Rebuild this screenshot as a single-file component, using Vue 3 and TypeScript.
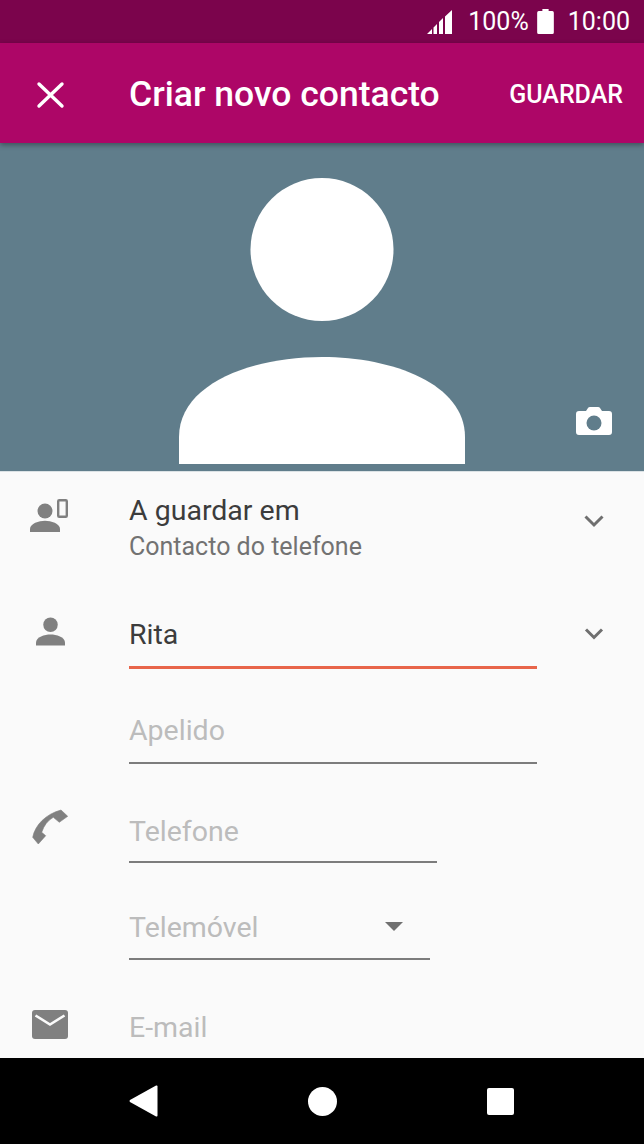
<script setup lang="ts">
const closePath = 'M39 84 L62 106 M62 84 L39 106'
</script>

<template>
  <div class="phone">
    <div class="status">
      <svg class="signal" width="25" height="24" viewBox="0 0 25 24">
        <path d="M0 24 L5 19 V24 Z M6.500 24 V17.500 L10 14 V24 Z M12 24 V12 L16 8 V24 Z M18 24 V6.500 L25 0 V24 Z" fill="#fff" />
      </svg>
      <span class="pct">100%</span>
      <svg class="battery" width="17" height="25" viewBox="0 0 16 24">
        <path d="M5 0 H11 V2 H14.500 Q16 2 16 3.500 V22.500 Q16 24 14.500 24 H1.500 Q0 24 0 22.500 V3.500 Q0 2 1.500 2 H5 Z" fill="#fff" />
      </svg>
      <span class="time">10:00</span>
    </div>

    <header class="appbar">
      <svg class="close" width="100" height="100" viewBox="0 43 100 100">
        <path :d="closePath" stroke="#fff" stroke-width="3.4" stroke-linecap="round" fill="none" />
      </svg>
      <h1>Criar novo contacto</h1>
      <button>GUARDAR</button>
    </header>

    <section class="hero">
      <svg class="avatar" width="286" height="286" viewBox="0 0 286 286">
        <circle cx="143" cy="71.500" r="71.500" fill="#fff" />
        <path d="M0 286 V259 C0 206 72 179 143 179 C214 179 286 206 286 259 V286 Z" fill="#fff" />
      </svg>
      <svg class="camera" width="36" height="28" viewBox="0 0 36 28">
        <path d="M10 4 L12 1 Q12.500 0 14 0 H22 Q23.500 0 24 1 L26 4 H33 Q36 4 36 7 V25 Q36 28 33 28 H3 Q0 28 0 25 V7 Q0 4 3 4 Z" fill="#fff" />
        <circle cx="18" cy="16" r="7.500" fill="#607d8b" />
      </svg>
    </section>

    <main class="form">
      <div class="row account">
        <div class="icon">
          <svg width="40" height="34" viewBox="0 0 40 34">
            <circle cx="15" cy="12" r="7.500" fill="#808080" />
            <path d="M0 33 V30 C0 24.500 9 21.700 15 21.700 C21 21.700 30 24.500 30 30 V33 Z" fill="#808080" />
            <rect x="28.200" y="1.200" width="8.600" height="16.600" rx="1" fill="none" stroke="#808080" stroke-width="2.400" />
          </svg>
        </div>
        <div class="grow">
          <div class="main-text">A guardar em</div>
          <div class="sub-text">Contacto do telefone</div>
        </div>
        <svg class="chev" width="22" height="14" viewBox="0 0 22 14">
          <path d="M2.500 2.500 L11 11 L19.500 2.500" stroke="#6f6f6f" stroke-width="3" fill="none" />
        </svg>
      </div>

      <div class="row name">
        <div class="icon">
          <svg width="29" height="30" viewBox="0 0 30 30">
            <circle cx="15" cy="7.500" r="7.500" fill="#808080" />
            <path d="M0 29 V26 C0 20 9 17.500 15 17.500 C21 17.500 30 20 30 26 V29 Z" fill="#808080" />
          </svg>
        </div>
        <div class="field active wide"><span class="value">Rita</span></div>
        <svg class="chev" width="22" height="14" viewBox="0 0 22 14">
          <path d="M3 2.500 L11 10.500 L19 2.500" stroke="#6f6f6f" stroke-width="3" fill="none" />
        </svg>
      </div>

      <div class="row last">
        <div class="icon"></div>
        <div class="field wide"><span class="hint">Apelido</span></div>
      </div>

      <div class="row phone-row">
        <div class="icon">
          <svg width="38" height="37" viewBox="0 0 38 37">
            <path d="M30 2 L36.700 8.300 L28.300 14.300 L22.300 9.300 Q14 14 10.700 24.300 L14.700 27.700 L7.300 36 L1.700 29.300 C4 17 15 6 30 2 Z" fill="#808080" stroke="#808080" stroke-width="0.6" stroke-linejoin="round" />
          </svg>
        </div>
        <div class="field tel"><span class="hint">Telefone</span></div>
      </div>

      <div class="row type-row">
        <div class="icon"></div>
        <div class="field type">
          <span class="hint">Telemóvel</span>
          <svg class="caret" width="18" height="9" viewBox="0 0 18 9"><path d="M0 0 H18 L9 9 Z" fill="#707070" /></svg>
        </div>
      </div>

      <div class="row mail">
        <div class="icon">
          <svg width="36" height="29" viewBox="0 0 36 29">
            <rect width="36" height="29" rx="3" fill="#808080" />
            <path d="M3.500 5.500 L18 14.500 L32.500 5.500" stroke="#fafafa" stroke-width="2.600" fill="none" />
          </svg>
        </div>
        <span class="hint">E-mail</span>
      </div>
    </main>

    <nav class="navbar">
      <svg width="29" height="34" viewBox="0 0 30 34">
        <path d="M28 1 Q29.500 0.500 29.500 2 V32 Q29.500 33.500 28 33 L1 18 Q0 17 1 16 Z" fill="#fff" />
      </svg>
      <span class="home"></span>
      <span class="recent"></span>
    </nav>
  </div>
</template>

<style>
html,
body {
  margin: 0;
  background: #fafafa;
}
</style>

<style scoped>
.phone {
  width: 644px;
  height: 1144px;
  display: flex;
  flex-direction: column;
  overflow: hidden;
  font-family: Roboto, sans-serif;
}

.status {
  height: 43px;
  flex: none;
  background: #7b044c;
  color: #fff;
  display: flex;
  align-items: center;
  justify-content: flex-end;
  font-size: 25px;
  padding-right: 14px;
  box-sizing: border-box;
}

.signal {
  margin-right: 16px;
}

.pct {
  margin-right: 8px;
}

.battery {
  margin-right: 14px;
}

.appbar {
  height: 100px;
  flex: none;
  background: #ad0667;
  color: #fff;
  display: flex;
  align-items: center;
  position: relative;
  z-index: 1;
  box-shadow: 0 2px 5px rgba(0, 0, 0, 0.35);
}

.close {
  flex: none;
  margin-right: 29px;
}

h1 {
  margin: 0;
  padding-top: 2px;
  font-size: 35.500px;
  font-weight: 500;
  flex: 1;
  white-space: nowrap;
}

button {
  background: none;
  border: 0;
  padding: 2px 0 0;
  margin-right: 21px;
  color: #fff;
  font-family: inherit;
  font-size: 25px;
  font-weight: 500;
}

.hero {
  height: 328px;
  flex: none;
  background: #607d8b;
  position: relative;
  display: flex;
  justify-content: center;
  padding-top: 35px;
  box-sizing: border-box;
}

.camera {
  position: absolute;
  right: 32px;
  bottom: 36px;
}

.form {
  flex: 1;
  min-height: 0;
  overflow: hidden;
  background: #fafafa;
  border-top: 1px solid #dbe2e5;
}

.row {
  display: flex;
  align-items: flex-start;
}

.icon {
  width: 129px;
  flex: none;
  padding-left: 30px;
  box-sizing: border-box;
}

.grow {
  flex: 1;
}

.chev {
  flex: none;
  margin-left: 46px;
}

.account {
  padding-top: 23px;
}

.account .icon svg {
  display: block;
  margin-top: 4px;
}

.account .chev {
  margin-left: 0;
  margin-right: 39px;
  margin-top: 19px;
}

.main-text {
  font-size: 28.500px;
  line-height: 32px;
  color: #3c3c3c;
}

.sub-text {
  font-size: 25px;
  line-height: 30px;
  margin-top: 5px;
  color: #727272;
}

.name {
  margin-top: 22px;
}

.name .icon {
  padding-left: 36px;
  padding-top: 33px;
}

.name .chev {
  margin-left: 46px;
  margin-top: 43px;
}

.field {
  box-sizing: border-box;
  border-bottom: 2px solid #7c7c7c;
  height: 96px;
  padding-top: 43px;
  position: relative;
}

.wide {
  width: 408px;
}

.active {
  height: 85px;
  padding-top: 35px;
  border-bottom: 3px solid #e8654a;
}

.value,
.hint {
  font-size: 28.500px;
  line-height: 32px;
  display: block;
}

.value {
  color: #3c3c3c;
}

.hint {
  color: #bcbcbc;
}

.last {
  margin-top: 0;
}

.last .field {
  height: 95px;
  padding-top: 46px;
}

.phone-row .icon {
  padding-left: 31px;
  padding-top: 44px;
}

.tel {
  width: 308px;
  height: 99px;
  padding-top: 52px;
}

.type {
  width: 301px;
  height: 97px;
  padding-top: 49px;
}

.caret {
  position: absolute;
  right: 27px;
  top: 59px;
}

.mail {
  padding-top: 50px;
}

.mail .icon {
  padding-left: 32px;
}

.mail .hint {
  padding-top: 2px;
}

.navbar {
  height: 86px;
  flex: none;
  background: #000;
  display: flex;
  align-items: center;
  padding: 0 130px 0 129px;
  justify-content: space-between;
  box-sizing: border-box;
}

.home {
  width: 29px;
  height: 29px;
  border-radius: 50%;
  background: #fff;
}

.recent {
  width: 27px;
  height: 27px;
  border-radius: 2px;
  background: #fff;
}
</style>
